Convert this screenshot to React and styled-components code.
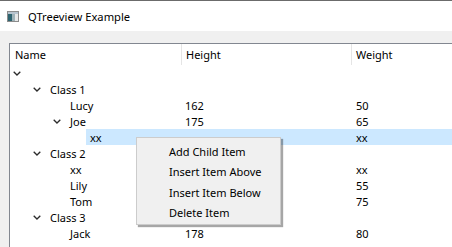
import styled, { createGlobalStyle } from "styled-components";

const GlobalStyle = createGlobalStyle`
    html, body {
        margin: 0;
        padding: 0;
        background: #f0f0f0;
        overflow: hidden;
    }
    body {
        font-family: "Noto Sans", "Open Sans", sans-serif;
        font-size: 11px;
        color: #000;
    }
`;

const Window = styled.div`
    width: 452px;
    height: 247px;
    display: flex;
    flex-direction: column;
    position: relative;
    overflow: hidden;
    border-top: 1px solid #6b6b6b;
    box-sizing: border-box;
    background: #f0f0f0;
`;

const TitleBar = styled.div`
    height: 30px;
    flex: none;
    background: #fff;
    display: flex;
    align-items: center;
    gap: 9px;
    padding-left: 7px;
`;

const Title = styled.span`
    font-size: 11.2px;
    line-height: 1;
    margin-top: 1px;
`;

const Body = styled.div`
    flex: 1;
    padding: 12px 0 0 9px;
    display: flex;
    min-height: 0;
`;

const Tree = styled.div`
    flex: 1;
    background: #fff;
    border: 1px solid #828790;
    border-right: none;
    border-bottom: none;
    display: flex;
    flex-direction: column;
`;

const Grid = styled.div`
    display: grid;
    grid-template-columns: 171px 170px 1fr;
    height: ${(p) => p.h}px;
    background: ${(p) => (p.selected ? "#cce8ff" : "transparent")};
`;

const HeaderCell = styled.div`
    display: flex;
    align-items: center;
    padding-left: ${(p) => (p.first ? 5 : 4)}px;
    border-left: ${(p) => (p.first ? "none" : "1px solid #e5e5e5")};
    padding-bottom: 1px;
`;

const NameCell = styled.div`
    display: flex;
    align-items: stretch;
    padding-left: ${(p) => p.level * 20}px;
    background: #fff;
`;

const Branch = styled.div`
    width: 16px;
    flex: none;
    display: flex;
    align-items: center;
    padding-left: 3px;
    box-sizing: border-box;
`;

const Label = styled.div`
    flex: 1;
    display: flex;
    align-items: center;
    padding-left: 4px;
    background: ${(p) => (p.selected ? "#cce8ff" : "transparent")};
`;

const ValueCell = styled.div`
    display: flex;
    align-items: center;
    padding-left: ${(p) => (p.last ? 5 : 4)}px;
`;

const Menu = styled.div`
    position: absolute;
    left: 136px;
    top: 136px;
    width: 145px;
    height: 88px;
    box-sizing: border-box;
    background: #f0f0f0;
    border: 1px solid #cccccc;
    box-shadow: 2px 2px 1px rgba(0, 0, 0, 0.35);
    padding: 3px 0 1px;
    display: flex;
    flex-direction: column;
`;

const MenuItem = styled.div`
    height: 20.8px;
    display: flex;
    align-items: center;
    padding-left: 32px;
`;

const Chevron = () => (
    <svg width="8" height="5" viewBox="0 0 8 5">
        <path d="M0.7 0.7 L4 4 L7.3 0.7" fill="none" stroke="#2b2b2b" strokeWidth="1.3" />
    </svg>
);

const AppIcon = () => (
    <svg width="12" height="11" viewBox="0 0 12 11">
        <rect x="0.5" y="0.5" width="11" height="10" fill="#e8e8e8" stroke="#8c8c8c" />
        <rect x="1" y="1" width="10" height="2" fill="#b7c4cf" />
        <rect x="1" y="3" width="4" height="7" fill="#2e6470" />
        <rect x="5" y="3" width="3" height="7" fill="#9fb2b8" />
    </svg>
);

// cells hidden by the context menu are left empty
const rows = [
    { level: 0, name: "", open: true },
    { level: 1, name: "Class 1", open: true },
    { level: 2, name: "Lucy", h: "162", w: "50" },
    { level: 2, name: "Joe", h: "175", w: "65", open: true },
    { level: 3, name: "xx", h: "", w: "xx", selected: true },
    { level: 1, name: "Class 2", open: true },
    { level: 2, name: "xx", h: "", w: "xx" },
    { level: 2, name: "Lily", h: "", w: "55" },
    { level: 2, name: "Tom", h: "", w: "75" },
    { level: 1, name: "Class 3", open: true },
    { level: 2, name: "Jack", h: "178", w: "80" },
];

export default function App() {
    return (
        <>
            <GlobalStyle />
            <Window>
                <TitleBar>
                    <AppIcon />
                    <Title>QTreeview Example</Title>
                </TitleBar>
                <Body>
                    <Tree>
                        <Grid h={21}>
                            <HeaderCell first>Name</HeaderCell>
                            <HeaderCell>Height</HeaderCell>
                            <HeaderCell>Weight</HeaderCell>
                        </Grid>
                        {rows.map((r, i) => (
                            <Grid key={i} h={16} selected={r.selected}>
                                <NameCell level={r.level}>
                                    <Branch>{r.open && <Chevron />}</Branch>
                                    <Label selected={r.selected}>{r.name}</Label>
                                </NameCell>
                                <ValueCell>{r.h}</ValueCell>
                                <ValueCell last>{r.w}</ValueCell>
                            </Grid>
                        ))}
                    </Tree>
                </Body>
                <Menu>
                    <MenuItem>Add Child Item</MenuItem>
                    <MenuItem>Insert Item Above</MenuItem>
                    <MenuItem>Insert Item Below</MenuItem>
                    <MenuItem>Delete Item</MenuItem>
                </Menu>
            </Window>
        </>
    );
}
